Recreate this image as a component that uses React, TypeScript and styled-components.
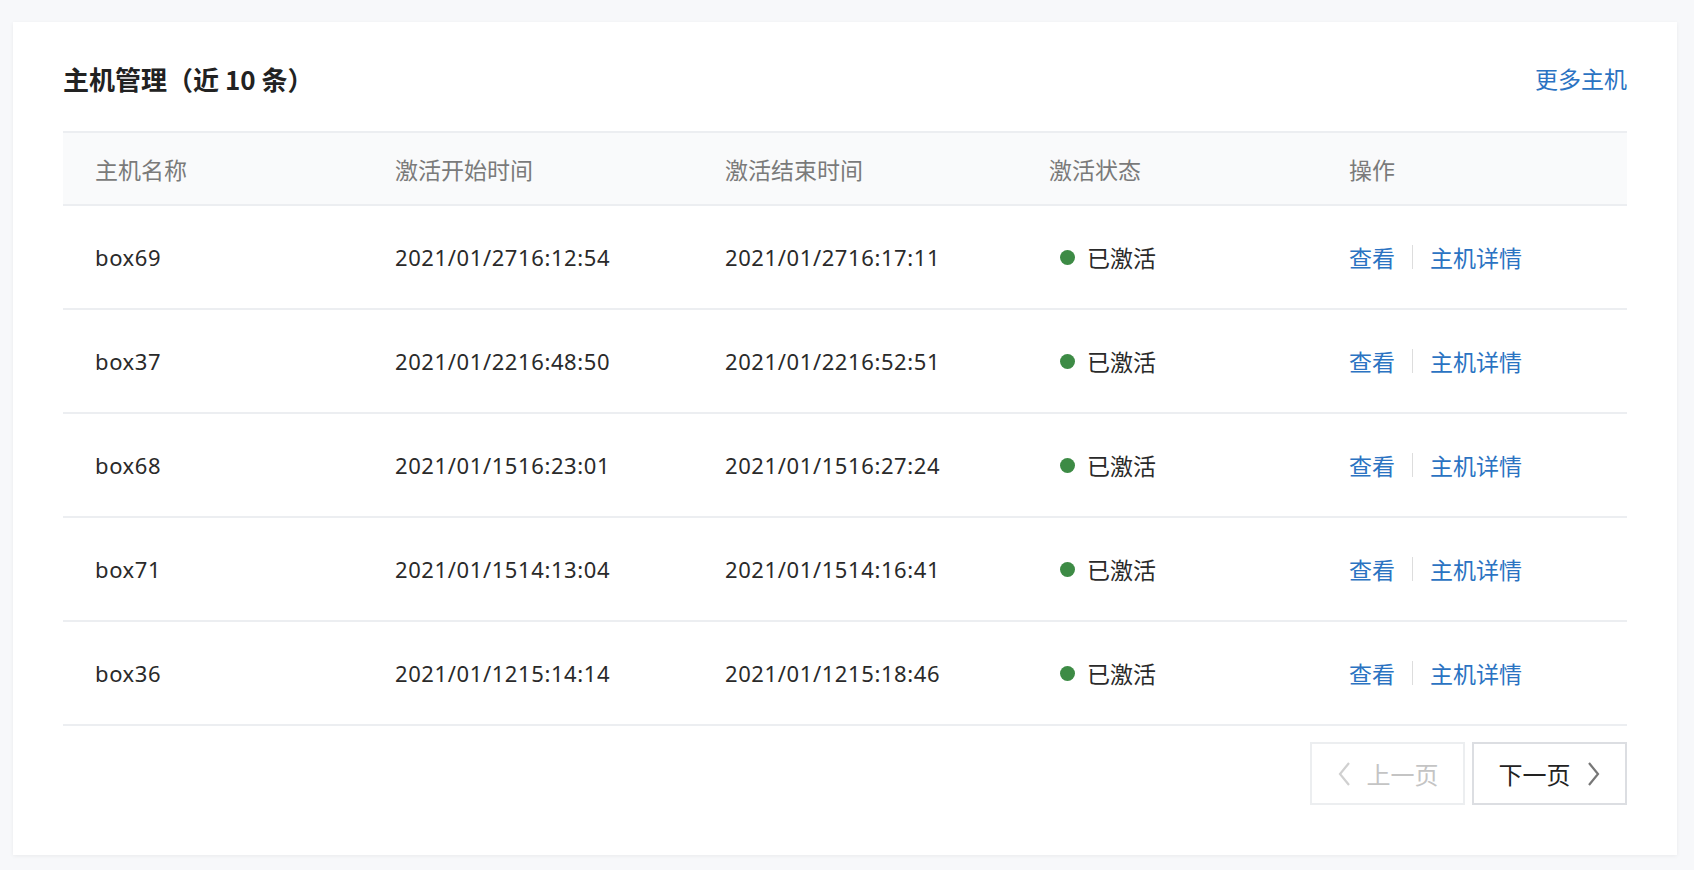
import React from 'react';
import styled, { createGlobalStyle } from 'styled-components';

const GlobalStyle = createGlobalStyle`
  html, body { margin: 0; background: #f7f8fa; }
  body {
    font-family: "Noto Sans CJK SC", "Noto Sans", sans-serif;
    color: #333;
  }
`;

const Page = styled.div`
  padding: 22px 17px 15px 13px;
`;

const Card = styled.section`
  background: #fff;
  box-shadow: 0 1px 4px rgba(0, 0, 0, 0.06);
  padding: 36px 50px 50px 50px;
  height: 833px;
  box-sizing: border-box;
`;

const CardHeader = styled.div`
  display: flex;
  justify-content: space-between;
  align-items: center;
  height: 40px;
  margin-bottom: 33px;
`;

const Title = styled.h2`
  margin: 0;
  font-size: 26px;
  font-weight: 600;
  color: #222;
`;

const Link = styled.a`
  color: #2b73c2;
  font-size: 23px;
  cursor: pointer;
`;

const Table = styled.div`
  border-top: 2px solid #eceef1;
`;

const Row = styled.div<{ $head?: boolean }>`
  display: grid;
  grid-template-columns: 300px 330px 324px 300px 1fr;
  align-items: center;
  height: ${(p) => (p.$head ? 71 : 102)}px;
  padding-left: 32px;
  border-bottom: 2px solid #eceef1;
  background: ${(p) => (p.$head ? '#f9fafb' : '#fff')};
  color: ${(p) => (p.$head ? '#7a7a7a' : '#2a2a2a')};
  font-size: ${(p) => (p.$head ? 23 : 22)}px;
  letter-spacing: ${(p) => (p.$head ? 0 : 0.6)}px;
  font-family: ${(p) => (p.$head ? '"Noto Sans CJK SC", sans-serif' : '"Noto Sans", "Noto Sans CJK SC", sans-serif')};
`;

const Status = styled.span`
  display: flex;
  align-items: center;
  gap: 12px;
  padding-left: 11px;
  font-size: 23px;
  letter-spacing: 0;
  font-family: "Noto Sans CJK SC", sans-serif;
`;

const Dot = styled.i`
  width: 15px;
  height: 15px;
  border-radius: 50%;
  background: #3d8b45;
`;

const Actions = styled.span`
  display: flex;
  align-items: center;
  letter-spacing: 0;
  font-family: "Noto Sans CJK SC", sans-serif;
`;

const Divider = styled.span`
  width: 1px;
  height: 24px;
  background: #ddd;
  margin: 0 17px;
`;

const Pager = styled.div`
  display: flex;
  justify-content: flex-end;
  gap: 7px;
  margin-top: 16px;
`;

const PageButton = styled.button<{ $disabled?: boolean }>`
  display: flex;
  align-items: center;
  justify-content: center;
  gap: 16px;
  width: 155px;
  height: 63px;
  background: #fff;
  border: 2px solid ${(p) => (p.$disabled ? '#eceef0' : '#dcdee2')};
  color: ${(p) => (p.$disabled ? '#c4c4c4' : '#222')};
  font-size: 24px;
  font-family: "Noto Sans CJK SC", sans-serif;
  cursor: ${(p) => (p.$disabled ? 'default' : 'pointer')};
`;

const Chevron = ({ dir, color }: { dir: 'left' | 'right'; color: string }) => (
  <svg width="14" height="26" viewBox="0 0 14 26" fill="none">
    <path
      d={dir === 'left' ? 'M12 2 L3 13 L12 24' : 'M2 2 L11 13 L2 24'}
      stroke={color}
      strokeWidth="2.2"
    />
  </svg>
);

const rows = [
  ['box69', '2021/01/2716:12:54', '2021/01/2716:17:11'],
  ['box37', '2021/01/2216:48:50', '2021/01/2216:52:51'],
  ['box68', '2021/01/1516:23:01', '2021/01/1516:27:24'],
  ['box71', '2021/01/1514:13:04', '2021/01/1514:16:41'],
  ['box36', '2021/01/1215:14:14', '2021/01/1215:18:46'],
];

export default function App() {
  return (
    <>
      <GlobalStyle />
      <Page>
        <Card>
          <CardHeader>
            <Title>主机管理（近 10 条）</Title>
            <Link>更多主机</Link>
          </CardHeader>
          <Table>
            <Row $head>
              <span>主机名称</span>
              <span>激活开始时间</span>
              <span>激活结束时间</span>
              <span>激活状态</span>
              <span>操作</span>
            </Row>
            {rows.map(([name, start, end]) => (
              <Row key={name}>
                <span>{name}</span>
                <span>{start}</span>
                <span>{end}</span>
                <Status>
                  <Dot />
                  已激活
                </Status>
                <Actions>
                  <Link>查看</Link>
                  <Divider />
                  <Link>主机详情</Link>
                </Actions>
              </Row>
            ))}
          </Table>
          <Pager>
            <PageButton $disabled>
              <Chevron dir="left" color="#d0d0d0" />
              上一页
            </PageButton>
            <PageButton>
              下一页
              <Chevron dir="right" color="#777" />
            </PageButton>
          </Pager>
        </Card>
      </Page>
    </>
  );
}
